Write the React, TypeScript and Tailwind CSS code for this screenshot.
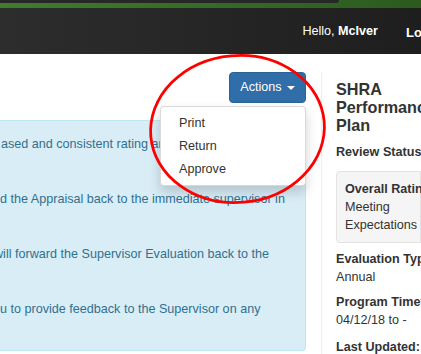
import { useState } from 'react'

const notes = [
  { text: 'ased and consistent rating and feedback for the employee.', indent: 'ml-[1px]' },
  { text: 'd the Appraisal back to the immediate supervisor in', indent: 'ml-0' },
  { text: 'will forward the Supervisor Evaluation back to the', indent: 'ml-[-6px]' },
  { text: 'u to provide feedback to the Supervisor on any', indent: 'ml-0' },
]

const actions = ['Print', 'Return', 'Approve']

function TopBar() {
  return (
    <header className="h-[54px] flex flex-col">
      <div className="h-[8px] bg-gradient-to-r from-[#3f7d2c] to-[#2c5a1f]">
        <div className="w-[339px] h-[3px] bg-[#272727] rounded-br-[4px]" />
      </div>
      <nav className="flex-1 flex justify-end bg-gradient-to-r from-[#2d2d2d] to-[#1e1e1e] text-white text-[12.6px] leading-[18px]">
        <div className="pt-[14px] mr-[28px]">
          Hello, <span className="font-bold">McIver</span>
        </div>
        <div className="pt-[16px] w-[15px] overflow-hidden whitespace-nowrap font-bold text-[13px]">Logout</div>
      </nav>
    </header>
  )
}

function ActionsMenu() {
  const [open] = useState(true)
  return (
    <div className="relative flex justify-end pt-[18px]">
      <button className="h-[31px] w-[77px] flex items-center justify-center gap-[5px] rounded-[4px] border border-[#2a6496] bg-[#2f6ea8] text-white text-[12.6px]">
        Actions
        <span className="w-0 h-0 border-x-[4px] border-x-transparent border-t-[4px] border-t-white mt-[1px]" />
      </button>
      {open && (
        <ul className="absolute top-[52px] right-0 w-[146px] py-[4px] bg-white border border-black/15 rounded-[4px] shadow-[0_6px_12px_rgba(0,0,0,0.175)] z-10">
          {actions.map(a => (
            <li key={a} className="px-[18px] py-[2.7px] leading-[18px] text-[12.6px] text-[#333]">
              {a}
            </li>
          ))}
        </ul>
      )}
    </div>
  )
}

function DetailRow({ label, value, className }: { label: string; value: string; className: string }) {
  return (
    <div className={className}>
      <div className="font-bold">{label}</div>
      <div>{value}</div>
    </div>
  )
}

export default function App() {
  return (
    <div className="relative w-[421px] h-[354px] overflow-hidden bg-white font-['Liberation_Sans',Arial,sans-serif] text-[#333]">
      <TopBar />
      <main className="flex">
        <section className="w-[321px] shrink-0 pr-[15px]">
          <ActionsMenu />
          <div className="mt-[17px] h-[231px] pt-[14px] bg-[#d9edf7] border-y border-r border-[#bce8f1] rounded-r-[4px] overflow-hidden text-[#31708f] text-[12.6px] leading-[18px]">
            <div className="flex flex-col gap-[37px]">
              {notes.map(n => (
                <p key={n.text} className={`whitespace-nowrap ${n.indent}`}>
                  {n.text}
                </p>
              ))}
            </div>
          </div>
        </section>

        <aside className="flex-1 min-w-0 mt-[18px] border-l border-[#eeeeee] pl-[14px] text-[12.6px] leading-[18px] whitespace-nowrap">
          <h3 className="pt-[9px] text-[16.2px] leading-[17.8px] font-bold">
            SHRA
            <br />
            Performance
            <br />
            Plan
          </h3>
          <div className="mt-[9px] font-bold">Review Status</div>
          <div className="mt-[10px] h-[72px] pl-[8px] pt-[8px] bg-[#f5f5f5] border border-[#e3e3e3] rounded-l-[4px]">
            <div className="font-bold">Overall Rating</div>
            <div>Meeting</div>
            <div>Expectations</div>
          </div>
          <DetailRow className="mt-[7px]" label="Evaluation Type:" value="Annual" />
          <DetailRow className="mt-[7px]" label="Program Timeframe:" value="04/12/18 to -" />
          <div className="mt-[9px] font-bold">Last Updated:</div>
        </aside>
      </main>

      <svg className="absolute inset-0 pointer-events-none z-20" width="421" height="354">
        <ellipse
          cx="237.5"
          cy="129"
          rx="87"
          ry="73.5"
          transform="rotate(-5 237.5 129)"
          fill="none"
          stroke="#ff0000"
          strokeWidth="2.8"
        />
      </svg>
    </div>
  )
}
